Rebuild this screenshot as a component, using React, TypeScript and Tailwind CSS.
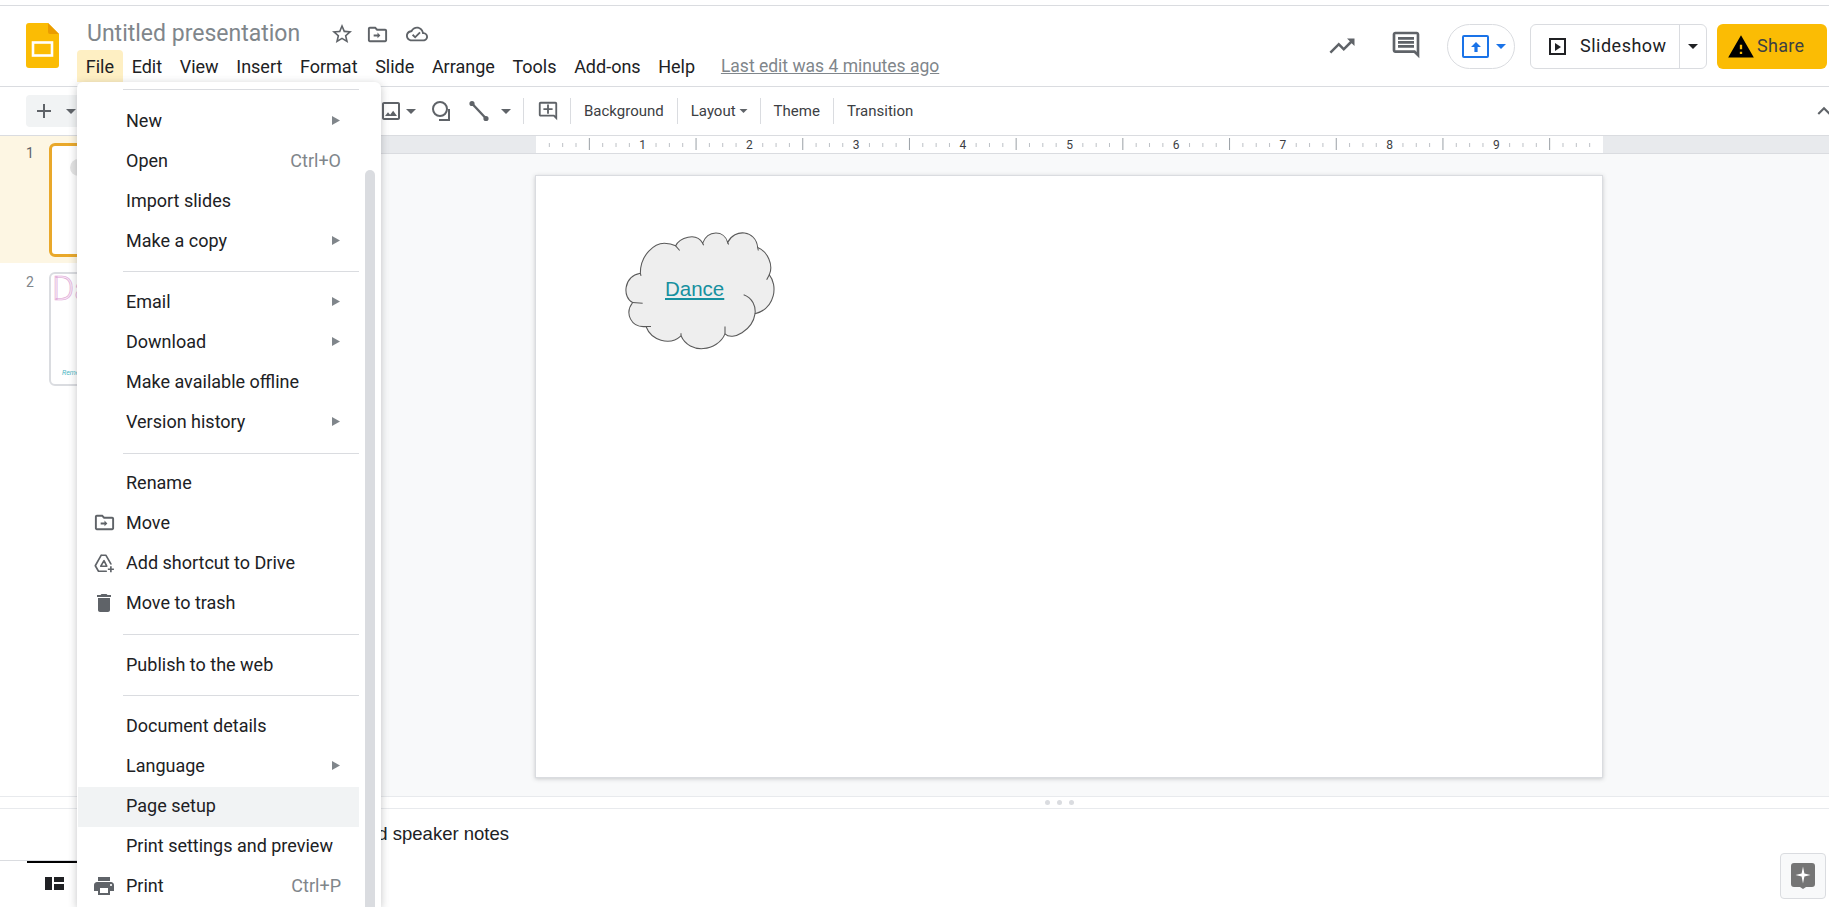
import type { ReactNode } from "react";

const ICONS = {
  star: "M22 9.24l-7.19-.62L12 2 9.19 8.63 2 9.24l5.46 4.73L5.82 21 12 17.27 18.18 21l-1.63-7.03L22 9.24zM12 15.4l-3.76 2.27 1-4.28-3.32-2.88 4.38-.38L12 6.1l1.71 4.04 4.38.38-3.32 2.88 1 4.28L12 15.4z",
  move: "M20 6h-8l-2-2H4c-1.1 0-2 .9-2 2v12c0 1.1.9 2 2 2h16c1.1 0 2-.9 2-2V8c0-1.1-.9-2-2-2zm0 12H4V6h5.17l2 2H20v10zm-8-4H8v-2h4v-2l3 3-3 3v-2z",
  cloud: "M19.35 10.04C18.67 6.59 15.64 4 12 4 9.11 4 6.6 5.64 5.35 8.04 2.34 8.36 0 10.91 0 14c0 3.31 2.69 6 6 6h13c2.76 0 5-2.24 5-5 0-2.64-2.05-4.78-4.65-4.96zM19 18H6c-2.21 0-4-1.79-4-4 0-2.05 1.53-3.76 3.56-3.97l1.07-.11.5-.95C8.08 7.14 9.94 6 12 6c2.62 0 4.88 1.86 5.39 4.43l.3 1.5 1.53.11c1.56.1 2.78 1.41 2.78 2.96 0 1.65-1.35 3-3 3zm-9-3.82l-2.09-2.09L6.5 13.5 10 17l6.01-6.01-1.41-1.41z",
  trend: "M16 6l2.29 2.29-4.88 4.88-4-4L2 16.59 3.41 18l6-6 4 4 6.3-6.29L22 12V6z",
  comment: "M21.99 4c0-1.1-.89-2-1.99-2H4c-1.1 0-2 .9-2 2v12c0 1.1.9 2 2 2h14l4 4-.01-18zM20 4v13.17L18.83 16H4V4h16zM6 12h12v2H6zm0-3h12v2H6zm0-3h12v2H6z",
  trash: "M6 19c0 1.1.9 2 2 2h8c1.1 0 2-.9 2-2V7H6v12zM19 4h-3.5l-1-1h-5l-1 1H5v2h14V4z",
  print: "M19 8H5c-1.66 0-3 1.34-3 3v6h4v4h12v-4h4v-6c0-1.66-1.34-3-3-3zm-3 11H8v-5h8v5zm3-7c-.55 0-1-.45-1-1s.45-1 1-1 1 .45 1 1-.45 1-1 1zm-1-9H6v4h12V3z",
  warning: "M1 21h22L12 2 1 21zm12-3h-2v-2h2v2zm0-4h-2v-4h2v4z",
  plus: "M19 13h-6v6h-2v-6H5v-2h6V5h2v6h6v2z",
  addComment: "M22 4c0-1.1-.9-2-2-2H4c-1.1 0-2 .9-2 2v12c0 1.1.9 2 2 2h14l4 4V4zm-2 13.17L18.83 16H4V4h16v13.17zM13 5h-2v4H7v2h4v4h2v-4h4V9h-4z",
  chevronUp: "M12 8l-6 6 1.41 1.41L12 10.83l4.59 4.58L18 14z",
  image: "M19 5v14H5V5h14m0-2H5c-1.1 0-2 .9-2 2v14c0 1.1.9 2 2 2h14c1.1 0 2-.9 2-2V5c0-1.1-.9-2-2-2zm-4.86 8.86l-3 3.87L9 13.14 6 17h12l-3.86-5.14z",
};

function Icon({ d, className }: { d: string; className: string }) {
  return (
    <svg viewBox="0 0 24 24" className={className} fill="currentColor">
      <path d={d} />
    </svg>
  );
}

function Caret({ className }: { className: string }) {
  return (
    <svg viewBox="0 0 10 5" className={className} fill="currentColor">
      <path d="M0 0h10L5 5z" />
    </svg>
  );
}

function SlidesLogo() {
  return (
    <svg viewBox="0 0 33 45" className="h-[45px] w-[33px]">
      <path d="M3 0h19l11 11v31a3 3 0 0 1-3 3H3a3 3 0 0 1-3-3V3a3 3 0 0 1 3-3z" fill="#fbbc04" />
      <path d="M22 0l11 11H24a2 2 0 0 1-2-2z" fill="#ea9c00" />
      <rect x="7" y="19.5" width="19" height="13" fill="none" stroke="#fff" strokeWidth="2.6" />
    </svg>
  );
}

function ToolbarSep() {
  return <div className="h-[26px] w-px shrink-0 bg-[#dadce0]" />;
}

function Ruler() {
  const inch = 106.7;
  const ticks: ReactNode[] = [];
  for (let i = 1; i < 80; i++) {
    const x = (i * inch) / 8;
    if (i % 8 === 0) continue;
    const major = i % 4 === 0;
    ticks.push(
      <line key={i} x1={x} x2={x} y1={major ? 2 : 7} y2={major ? 14 : 11} stroke={major ? "#9aa0a6" : "#bdc1c6"} strokeWidth="1" />,
    );
  }
  return (
    <svg width="1067" height="17" className="block bg-white">
      {ticks}
      {[1, 2, 3, 4, 5, 6, 7, 8, 9].map((n) => (
        <text key={n} x={n * inch} y="13" textAnchor="middle" fontSize="12" fontFamily="Roboto, sans-serif" fill="#3c4043">
          {n}
        </text>
      ))}
    </svg>
  );
}

function CloudShape() {
  return (
    <svg viewBox="60 55 480 380" className="h-[127px] w-[160px]" fill="none" stroke="#595959" strokeWidth="3.2">
      <path
        d="M118 190C118 135 160 100 190 100C203 100 215 103 224 108C235 85 285 65 305 100C320 60 370 60 380 98C400 55 465 60 470 113C500 125 518 165 505 195C530 225 525 295 462 312C455 360 395 395 372 372C350 425 265 435 240 378C205 410 150 390 135 350C90 355 70 310 95 278C65 265 65 200 118 190Z"
        fill="#eeeeee"
      />
      <path d="M428 255C455 265 465 290 462 312M372 350V372M224 108L236 122M305 100L308 106M380 98L383 104M470 113L472 122M505 195L497 210M95 278L125 280M135 350L150 350M240 378L240 370M118 190L120 198" />
    </svg>
  );
}

type MenuEntry =
  | { divider: true }
  | { label: string; shortcut?: string; arrow?: boolean; icon?: ReactNode; active?: boolean };

const menuEntries: MenuEntry[] = [
  { label: "New", arrow: true },
  { label: "Open", shortcut: "Ctrl+O" },
  { label: "Import slides" },
  { label: "Make a copy", arrow: true },
  { divider: true },
  { label: "Email", arrow: true },
  { label: "Download", arrow: true },
  { label: "Make available offline" },
  { label: "Version history", arrow: true },
  { divider: true },
  { label: "Rename" },
  { label: "Move", icon: <Icon d={ICONS.move} className="h-[23px] w-[23px]" /> },
  {
    label: "Add shortcut to Drive",
    icon: (
      <svg viewBox="0 0 24 24" className="h-[22px] w-[22px]" fill="none" stroke="currentColor" strokeWidth="1.8" strokeLinejoin="round" strokeLinecap="round">
        <path d="M9 3.5h5l5.5 9.5M9 3.5L2.5 15l3.5 6h8.5" />
        <path d="M12 9.5L8.5 15.5h6.5z" />
        <path d="M19.5 15.5v6.5M16.2 18.8h6.6" strokeLinecap="butt" />
      </svg>
    ),
  },
  { label: "Move to trash", icon: <Icon d={ICONS.trash} className="h-[24px] w-[24px]" /> },
  { divider: true },
  { label: "Publish to the web" },
  { divider: true },
  { label: "Document details" },
  { label: "Language", arrow: true },
  { label: "Page setup", active: true },
  { label: "Print settings and preview" },
  { label: "Print", shortcut: "Ctrl+P", icon: <Icon d={ICONS.print} className="h-[24px] w-[24px]" /> },
];

function FileMenu() {
  return (
    <div className="absolute left-[77px] top-[82px] z-20 h-[825px] w-[304px] overflow-hidden rounded-t-md bg-white pr-[22px] pt-[7px] shadow-[0_2px_8px_rgba(60,64,67,0.3)]">
      <div className="ml-[46px] h-px bg-[#dadce0]" />
      <div className="mt-[11px]">
        {menuEntries.map((entry, i) =>
          "divider" in entry ? (
            <div key={i} className="flex h-[21.4px] items-center pl-[46px]">
              <div className="h-px w-full bg-[#dadce0]" />
            </div>
          ) : (
            <div
              key={entry.label}
              className={`ml-px flex h-10 items-center pb-[2px] pr-[18px] text-[18px] text-[#202124] ${entry.active ? "bg-[#f1f3f4]" : ""}`}
            >
              <div className="flex w-[48px] shrink-0 justify-center pl-[4px] text-[#5f6368]">{entry.icon}</div>
              <span>{entry.label}</span>
              <div className="flex-1" />
              {entry.shortcut ? <span className="text-[#80868b]">{entry.shortcut}</span> : null}
              {entry.arrow ? (
                <svg viewBox="0 0 8 9" className="mr-px h-[9px] w-[8px]" fill="#80868b">
                  <path d="M0 0l8 4.5L0 9z" />
                </svg>
              ) : null}
            </div>
          ),
        )}
      </div>
      <div className="absolute bottom-0 right-[6px] top-[88px] w-[10px] rounded-t-md bg-[#dadce0]" />
    </div>
  );
}

function Header() {
  const menus = ["File", "Edit", "View", "Insert", "Format", "Slide", "Arrange", "Tools", "Add-ons", "Help"];
  return (
    <header className="flex h-[81px] items-start justify-between border-b border-[#dadce0] pl-[26px] pr-[2px]">
      <div className="flex">
        <div className="mt-[17px]">
          <SlidesLogo />
        </div>
        <div className="ml-[18px] mt-[12px]">
          <div className="flex h-[32px] items-center pl-[10px] text-[#5f6368]">
            <span className="text-[23px] text-[#80868b]">Untitled presentation</span>
            <Icon d={ICONS.star} className="ml-[30px] h-[24px] w-[24px]" />
            <Icon d={ICONS.move} className="ml-[12px] h-[23px] w-[23px]" />
            <Icon d={ICONS.cloud} className="ml-[17px] h-[22px] w-[22px]" />
          </div>
          <div className="flex h-[32px] items-center text-[18px] text-[#202124]">
            {menus.map((name) => (
              <span
                key={name}
                className={`flex h-[32px] items-center px-[8.8px] ${name === "File" ? "rounded-t-[4px] bg-[#feefc3]" : ""}`}
              >
                {name}
              </span>
            ))}
            <span className="ml-[17px] text-[17.5px] text-[#80868b] underline">Last edit was 4 minutes ago</span>
          </div>
        </div>
      </div>
      <div className="mt-[18px] flex items-center">
        <Icon d={ICONS.trend} className="mt-[-2px] h-[30px] w-[30px] text-[#5f6368]" />
        <Icon d={ICONS.comment} className="ml-[33px] mt-[-4px] h-[32px] w-[32px] text-[#5f6368]" />
        <div className="ml-[25px] flex h-[45px] w-[68px] items-center gap-[7px] rounded-full border border-[#dadce0] pl-[14px]">
          <div className="flex h-[23px] w-[27px] items-center justify-center rounded-[2px] border-2 border-[#1a73e8]">
            <svg viewBox="0 0 12 12" className="h-[12px] w-[12px]" fill="#1a73e8">
              <path d="M6 1l5 5H7.6v5H4.4V6H1z" />
            </svg>
          </div>
          <Caret className="h-[5px] w-[10px] text-[#1a73e8]" />
        </div>
        <div className="ml-[15px] flex h-[45px] w-[177px] items-center rounded-[6px] border border-[#dadce0]">
          <div className="flex h-full flex-1 items-center border-r border-[#dadce0] pl-[18px]">
            <div className="flex h-[17px] w-[17px] items-center justify-center border-2 border-[#202124]">
              <svg viewBox="0 0 6 8" className="h-[8px] w-[6px]" fill="#202124">
                <path d="M0 0l6 4-6 4z" />
              </svg>
            </div>
            <span className="mb-[3px] ml-[14px] text-[18px] tracking-[0.5px] text-[#202124]">Slideshow</span>
          </div>
          <div className="flex w-[26px] justify-center">
            <Caret className="h-[5px] w-[10px] text-[#202124]" />
          </div>
        </div>
        <div className="ml-[10px] flex h-[45px] w-[110px] items-center rounded-[6px] bg-[#fbbc04] pl-[10px]">
          <Icon d={ICONS.warning} className="h-[28px] w-[28px] text-black" />
          <span className="mb-[3px] ml-[2px] text-[18px] tracking-[0.3px] text-[#3c4043]">Share</span>
        </div>
      </div>
    </header>
  );
}

function Toolbar() {
  return (
    <div className="relative flex h-[49px] items-center border-b border-[#dadce0] pl-[26px] text-[15px] text-[#3c4043]">
      <div className="flex h-[32px] w-[70px] items-center rounded-[4px] bg-[#f1f3f4] pl-[6px] text-[#5f6368]">
        <Icon d={ICONS.plus} className="h-[24px] w-[24px]" />
        <Caret className="ml-[10px] h-[5px] w-[10px]" />
      </div>
      <div className="ml-[283px] flex items-center text-[#5f6368]">
        <Icon d={ICONS.image} className="h-[24px] w-[24px]" />
        <Caret className="ml-[3px] h-[5px] w-[10px]" />
        <svg viewBox="0 0 24 24" className="ml-[14px] h-[24px] w-[24px]" fill="none" stroke="currentColor" strokeWidth="2">
          <circle cx="10" cy="10" r="7" />
          <path d="M19 10v11H9" />
        </svg>
        <svg viewBox="0 0 24 24" className="ml-[13px] h-[24px] w-[24px]" fill="none" stroke="currentColor" strokeWidth="2.4">
          <path d="M4 3.5l16 17" />
          <circle cx="5" cy="4.5" r="1.4" fill="currentColor" />
          <circle cx="19" cy="19.5" r="1.4" fill="currentColor" />
        </svg>
        <Caret className="ml-[10px] h-[5px] w-[10px]" />
      </div>
      <div className="ml-[12px]">
        <ToolbarSep />
      </div>
      <Icon d={ICONS.addComment} className="ml-[13px] h-[22px] w-[22px] text-[#5f6368]" />
      <div className="ml-[11px]">
        <ToolbarSep />
      </div>
      <span className="ml-[13px]">Background</span>
      <div className="ml-[13px]">
        <ToolbarSep />
      </div>
      <span className="ml-[13px]">Layout</span>
      <Caret className="ml-[3px] h-[4px] w-[9px] text-[#5f6368]" />
      <div className="ml-[12px]">
        <ToolbarSep />
      </div>
      <span className="ml-[13px]">Theme</span>
      <div className="ml-[13px]">
        <ToolbarSep />
      </div>
      <span className="ml-[13px]">Transition</span>
      <Icon d={ICONS.chevronUp} className="absolute right-[-8px] top-[11px] h-[26px] w-[26px] text-[#5f6368]" />
    </div>
  );
}

function Filmstrip() {
  return (
    <aside className="flex w-[270px] shrink-0 flex-col text-[14px] text-[#5f6368]">
      <div className="flex h-[127px] bg-[#fdf6e3] pl-[26px] pt-[7px]">
        <span className="w-[23px]">1</span>
        <div className="relative h-[114px] w-[203px] rounded-[6px] border-[3px] border-[#e9a82a] bg-white">
          <div className="absolute left-[18px] top-[13px] h-[17px] w-[20px] rounded-full bg-[#e4e4e4]" />
        </div>
      </div>
      <div className="flex pl-[26px] pt-[9px]">
        <span className="w-[23px] text-[#80868b]">2</span>
        <div className="relative h-[114px] w-[203px] overflow-hidden rounded-[6px] border-2 border-[#dadce0] bg-white">
          <span className="absolute left-[1px] top-[-4px] text-[34px] font-light leading-[36px] text-[#f8eaf5] [-webkit-text-stroke:0.6px_#dfa6d6]">Dance</span>
          <span className="absolute left-[11px] top-[94px] text-[7px] italic text-[#4db6c4]">Remember</span>
        </div>
      </div>
    </aside>
  );
}

function Canvas() {
  return (
    <main className="flex min-w-0 flex-1 flex-col bg-[#f8f9fa]">
      <div className="h-[18px] border-b border-[#dadce0] bg-[#e8eaed] pl-[266px]">
        <Ruler />
      </div>
      <div className="flex-1 pl-[265px] pt-[21px]">
        <div className="relative h-[603px] w-[1068px] border border-[#dadce0] bg-white shadow-[0_1px_4px_rgba(60,64,67,0.25)]">
          <div className="absolute left-[85px] top-[52px]">
            <CloudShape />
          </div>
          <span className="absolute left-[129px] top-[98px] font-['Liberation_Sans',Arial,sans-serif] text-[20.5px] text-[#16909f] underline">
            Dance
          </span>
        </div>
      </div>
    </main>
  );
}

export default function App() {
  return (
    <div className="relative h-[907px] w-[1829px] overflow-hidden bg-white font-['Roboto',sans-serif]">
      <div className="mt-[5px] h-px bg-[#dadce0]" />
      <Header />
      <Toolbar />
      <div className="flex h-[660px]">
        <Filmstrip />
        <Canvas />
      </div>
      <div className="flex h-[13px] items-center justify-center gap-[7px] border-y border-[#e8eaed] bg-white pl-[290px] pr-[0px]">
        <span className="h-[5px] w-[5px] rounded-full bg-[#dadce0]" />
        <span className="h-[5px] w-[5px] rounded-full bg-[#dadce0]" />
        <span className="h-[5px] w-[5px] rounded-full bg-[#dadce0]" />
      </div>
      <div className="pl-[291px] pt-[13px] font-['Liberation_Sans',Arial,sans-serif] text-[18.5px] leading-[24px] text-[#202124]">
        Click to add speaker notes
      </div>
      <div className="absolute bottom-0 left-0 h-[47px] w-[77px] border-t border-[#dadce0]">
        <div className="ml-[27px] h-[2px] bg-black" />
        <div className="ml-[45px] mt-[14px] flex h-[13px] w-[19px] gap-[2px]">
          <div className="w-[7px] bg-[#202124]" />
          <div className="flex flex-1 flex-col gap-[2px]">
            <div className="h-[5px] bg-[#202124]" />
            <div className="flex-1 bg-[#202124]" />
          </div>
        </div>
      </div>
      <div className="absolute right-[3px] top-[853px] flex h-[46px] w-[46px] items-center justify-center rounded-[4px] border border-[#dadce0] bg-[#f8f9fa]">
        <svg viewBox="0 0 24 26" className="h-[26px] w-[24px]">
          <path d="M3 0h18a3 3 0 0 1 3 3v18a3 3 0 0 1-3 3h-6l-3 2-3-2H3a3 3 0 0 1-3-3V3a3 3 0 0 1 3-3z" fill="#757575" />
          <path d="M12 3.5l1.4 7.1L19.5 12l-6.1 1.4L12 20.5l-1.4-7.1L4.5 12l6.1-1.4z" fill="#fff" />
        </svg>
      </div>
      <FileMenu />
    </div>
  );
}
